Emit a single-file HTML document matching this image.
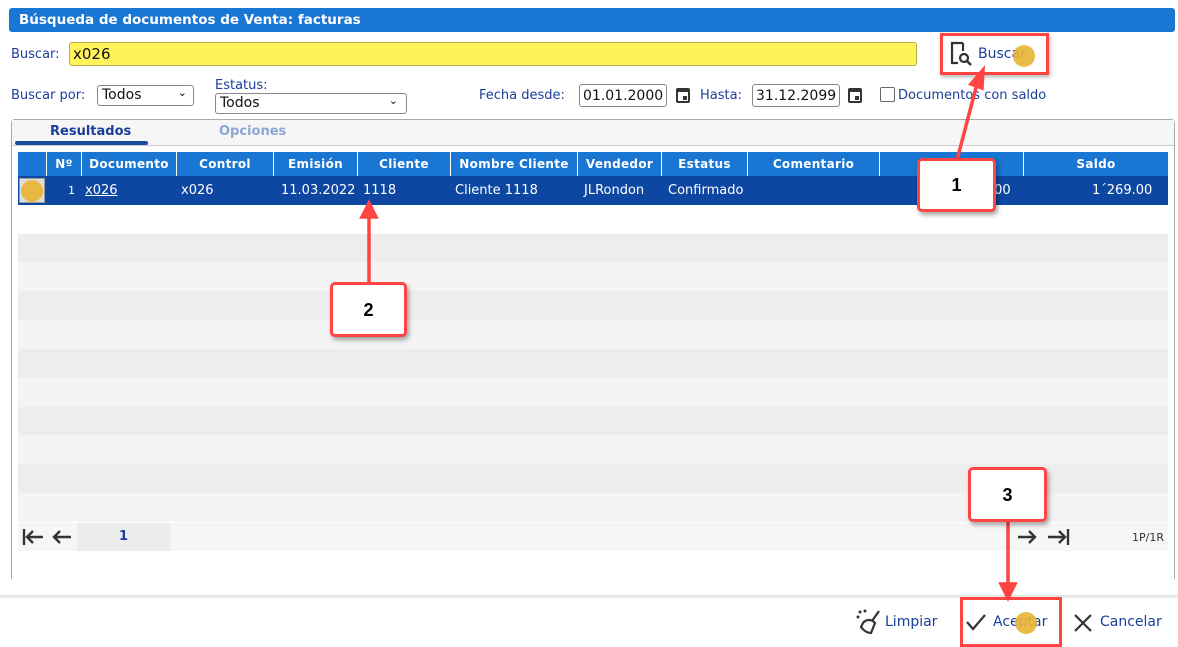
<!DOCTYPE html>
<html><head><meta charset="utf-8"><style>
*{box-sizing:border-box;margin:0;padding:0}
body{width:1178px;height:647px;background:#fff;font-family:"DejaVu Sans","Liberation Sans",sans-serif;position:relative;overflow:hidden;color:#1a3e9a}
.a{position:absolute;white-space:nowrap}
.title{left:9px;top:8px;width:1166px;height:24px;background:#1976d2;border-radius:3px;color:#fff;font-weight:bold;font-size:13.5px;padding:4px 0 0 10px}
.lbl{font-size:13px;color:#1a3e9a}
.sel{border:1px solid #888;border-radius:3px;background:#fff;font-size:14px;color:#111;padding:1px 4px}
.hd{top:152px;height:24px;background:#1976d2;color:#fff;font-weight:bold;font-size:12px;text-align:center;padding-top:5px;border-right:1px solid #fff;letter-spacing:.3px}
.cell{top:176px;height:29px;color:#fff;font-size:13px;padding-top:7px}
.row{left:18px;width:1150px;height:29px}
.box{background:#fff;border:3px solid #f44;border-radius:5px;font:bold 18px "Liberation Sans",sans-serif;color:#000;text-align:center;box-shadow:2px 3px 5px rgba(0,0,0,.35)}
.dot{width:22px;height:22px;border-radius:50%;background:#e9b434;opacity:.9}
.inp{border:1px solid #888;border-radius:3px;background:#fff;font-size:14px;color:#111;padding:3px 3px}
</style></head><body>
<div class="a title">Búsqueda de documentos de Venta: facturas</div>
<div class="a lbl" style="left:11px;top:47px">Buscar:</div>
<div class="a" style="left:69px;top:42px;width:848px;height:24px;background:#fff35a;border:1px solid #b9b24a;border-radius:3px;font-size:15px;color:#111;padding:2px 3px">x026</div>
<svg class="a" style="left:949px;top:41px" width="26" height="26" viewBox="0 0 26 26"><path d="M14 2H3v20h6" fill="none" stroke="#333" stroke-width="2.2"/><path d="M14 2v8" stroke="#333" stroke-width="2.2"/><circle cx="15" cy="17" r="4" fill="none" stroke="#333" stroke-width="2.2"/><path d="M18 20l4 4" stroke="#333" stroke-width="2.5"/></svg>
<div class="a" style="left:978px;top:46px;font-size:14px">Buscar</div>
<div class="a dot" style="left:1013px;top:45px"></div>
<div class="a" style="left:940px;top:33px;width:109px;height:42px;border:3px solid #f44;box-shadow:1px 2px 4px rgba(0,0,0,.3)"></div>

<div class="a lbl" style="left:11px;top:88px">Buscar por:</div>
<div class="a sel" style="left:97px;top:85px;width:97px;height:21px">Todos<span style="position:absolute;right:6px;top:0px;font-size:11px">⌄</span></div>
<div class="a lbl" style="left:215px;top:78px">Estatus:</div>
<div class="a sel" style="left:215px;top:93px;width:192px;height:21px">Todos<span style="position:absolute;right:8px;top:0px;font-size:11px">⌄</span></div>
<div class="a lbl" style="left:479px;top:88px">Fecha desde:</div>
<div class="a inp" style="left:579px;top:84px;width:88px;height:23px">01.01.2000</div>
<div class="a" style="left:676px;top:88px;width:14px;height:15px;border:2px solid #333;border-top-width:4px;border-radius:2px"><div style="position:absolute;right:1px;bottom:1px;width:4px;height:4px;background:#333"></div></div>
<div class="a lbl" style="left:700px;top:88px">Hasta:</div>
<div class="a inp" style="left:752px;top:84px;width:88px;height:23px">31.12.2099</div>
<div class="a" style="left:848px;top:88px;width:14px;height:15px;border:2px solid #333;border-top-width:4px;border-radius:2px"><div style="position:absolute;right:1px;bottom:1px;width:4px;height:4px;background:#333"></div></div>
<div class="a" style="left:880px;top:87px;width:15px;height:15px;border:1.5px solid #666;border-radius:2px"></div>
<div class="a lbl" style="left:898px;top:88px">Documentos con saldo</div>

<div class="a" style="left:11px;top:119px;width:1164px;height:460px;border:1px solid #aaa;border-bottom:none;border-radius:4px 4px 0 0"></div>
<div class="a" style="left:12px;top:120px;width:1162px;height:26px;background:#f6f6f6;border-bottom:1px solid #ccc"></div>
<div class="a" style="left:50px;top:124px;font-weight:bold;font-size:13px;color:#1a3e9a">Resultados</div>
<div class="a" style="left:15px;top:141px;width:133px;height:4px;background:#1a4ea0;border-radius:2px"></div>
<div class="a" style="left:219px;top:124px;font-weight:bold;font-size:13px;color:#8aa6d8">Opciones</div>

<div class="a" style="left:18px;top:205px;width:1150px;height:316px;background:#fff"></div>
<div class="a row" style="top:234px;background:#ededed"></div>
<div class="a row" style="top:291px;background:#ededed"></div>
<div class="a row" style="top:349px;background:#ededed"></div>
<div class="a row" style="top:407px;background:#ededed"></div>
<div class="a row" style="top:464px;background:#ededed"></div>
<div class="a row" style="top:262px;background:#f4f4f4"></div>
<div class="a row" style="top:320px;background:#f4f4f4"></div>
<div class="a row" style="top:378px;background:#f4f4f4"></div>
<div class="a row" style="top:435px;background:#f4f4f4"></div>
<div class="a row" style="top:493px;background:#f4f4f4"></div>

<div class="a hd" style="left:18px;width:29px"></div>
<div class="a hd" style="left:47px;width:35px">Nº</div>
<div class="a hd" style="left:82px;width:95px">Documento</div>
<div class="a hd" style="left:177px;width:97px">Control</div>
<div class="a hd" style="left:274px;width:84px">Emisión</div>
<div class="a hd" style="left:358px;width:93px">Cliente</div>
<div class="a hd" style="left:451px;width:127px">Nombre Cliente</div>
<div class="a hd" style="left:578px;width:84px">Vendedor</div>
<div class="a hd" style="left:662px;width:86px">Estatus</div>
<div class="a hd" style="left:748px;width:132px">Comentario</div>
<div class="a hd" style="left:880px;width:144px"></div>
<div class="a hd" style="left:1024px;width:144px;border:none">Saldo</div>
<div class="a" style="left:18px;top:176px;width:1150px;height:29px;background:#0d47a1"></div>
<div class="a" style="left:19px;top:178px;width:26px;height:25px;background:#ddd;border:1px solid #999"></div>
<div class="a dot" style="left:21px;top:180px"></div>
<div class="a cell" style="left:68px;font-size:11px;padding-top:8px">1</div>
<div class="a cell" style="left:85px;text-decoration:underline">x026</div>
<div class="a cell" style="left:181px">x026</div>
<div class="a cell" style="left:281px">11.03.2022</div>
<div class="a cell" style="left:363px">1118</div>
<div class="a cell" style="left:455px">Cliente 1118</div>
<div class="a cell" style="left:584px">JLRondon</div>
<div class="a cell" style="left:668px">Confirmado</div>
<div class="a cell" style="left:990px">.00</div>
<div class="a cell" style="left:1092px">1´269.00</div>

<div class="a" style="left:18px;top:523px;width:1150px;height:28px;background:#f6f6f6"></div>
<div class="a" style="left:77px;top:523px;width:93px;height:28px;background:#ececec;text-align:center;font-weight:bold;font-size:13px;padding-top:6px;color:#1a3e9a">1</div>
<svg class="a" style="left:21px;top:527px" width="52" height="20" viewBox="0 0 52 20"><g stroke="#333" stroke-width="2.4" fill="none"><path d="M3 2v16M22 10H6M12 4l-6 6 6 6M50 10H33M39 4l-6 6 6 6"/></g></svg>
<svg class="a" style="left:1016px;top:527px" width="56" height="20" viewBox="0 0 56 20"><g stroke="#333" stroke-width="2.4" fill="none"><path d="M2 10h17M13 4l6 6-6 6M32 10h17M43 4l6 6-6 6M52 2v16"/></g></svg>
<div class="a" style="left:1132px;top:531px;font-size:11px;color:#333">1P/1R</div>

<div class="a" style="left:0;top:595px;width:1178px;height:4px;background:linear-gradient(#ddd,#fff)"></div>
<svg class="a" style="left:855px;top:609px" width="28" height="26" viewBox="0 0 28 26"><g fill="#333"><circle cx="5" cy="3" r="1.5"/><circle cx="10" cy="2" r="1.5"/><circle cx="3" cy="8" r="1.5"/></g><path d="M24 2l-7 10M8 14c3-4 9-4 12 0l-4 10c-4 0-8-3-10-6z" fill="none" stroke="#333" stroke-width="2.2"/></svg>
<div class="a" style="left:885px;top:614px;font-size:14px">Limpiar</div>
<svg class="a" style="left:965px;top:612px" width="22" height="20" viewBox="0 0 22 20"><path d="M2 10l6 7L20 3" fill="none" stroke="#333" stroke-width="2.2"/></svg>
<div class="a" style="left:993px;top:614px;font-size:14px">Aceptar</div>
<div class="a dot" style="left:1015px;top:612px"></div>
<svg class="a" style="left:1073px;top:613px" width="20" height="20" viewBox="0 0 20 20"><path d="M2 2l16 16M18 2L2 18" stroke="#333" stroke-width="2.2"/></svg>
<div class="a" style="left:1100px;top:614px;font-size:14px">Cancelar</div>
<div class="a" style="left:960px;top:597px;width:102px;height:50px;border:3px solid #f44"></div>

<svg class="a" style="left:0;top:0" width="1178" height="647"><g stroke="#f44" stroke-width="3.5" fill="#f44"><path d="M957 160L978 80" fill="none"/><path d="M983 70l-1 18-11-4z"/><path d="M369 283V214" fill="none"/><path d="M369 203l7 14h-14z"/><path d="M1008 521V585" fill="none"/><path d="M1008 598l-7-14h14z"/></g></svg>
<div class="a box" style="left:917px;top:158px;width:79px;height:54px;padding-top:14px">1</div>
<div class="a box" style="left:330px;top:282px;width:77px;height:55px;padding-top:15px">2</div>
<div class="a box" style="left:968px;top:467px;width:79px;height:55px;padding-top:15px">3</div>
</body></html>
